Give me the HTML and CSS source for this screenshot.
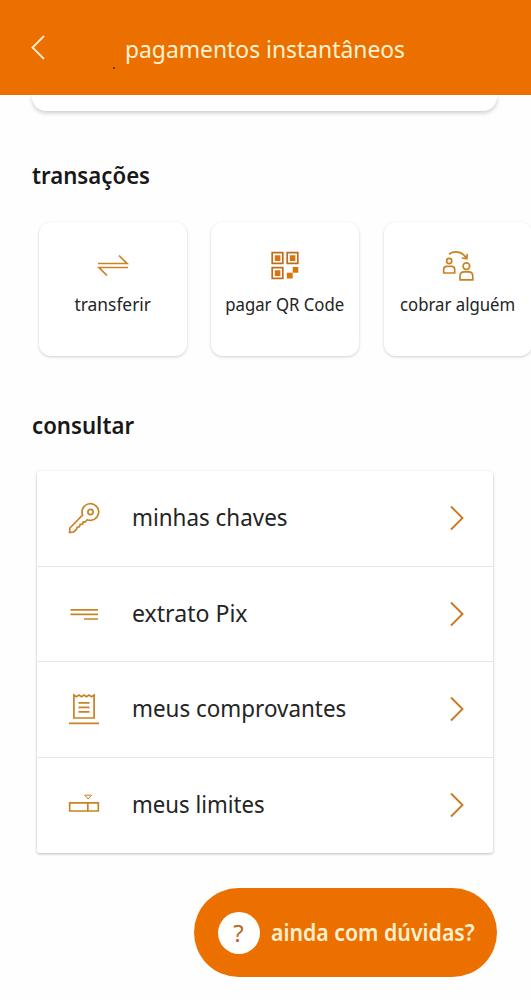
FILE: index.html
```html
<!DOCTYPE html>
<html lang="pt-BR">
<head>
<meta charset="utf-8">
<title>pagamentos instantâneos</title>
<link rel="stylesheet" href="styles.css">
</head>
<body>
<div class="screen">
  <header class="topbar">
    <svg class="back" width="16" height="28" viewBox="0 0 16 28"><path d="M14 2 L2.5 13.5 L14 25"/></svg>
    <span class="topbar-dot"></span>
    <h1 class="title">pagamentos instantâneos</h1>
  </header>
  <main class="content">
    <div class="peek"></div>
    <h2 class="heading">transações</h2>
    <div class="tiles">
      <a class="tile">
        <svg class="icon" width="34" height="34" viewBox="0 0 34 34"><path d="M2 15.5H31L23 7.5M32 19.5H3L11 27.5"/></svg>
        <span class="tile-label transfer">transferir</span>
      </a>
      <a class="tile">
        <svg class="icon qr" width="34" height="34" viewBox="0 0 34 34">
          <path d="M4.2 4.7h10.6v10.6H4.2zM19.2 4.7h10.6v10.6H19.2zM4.2 19.7h10.6v10.6H4.2z"/>
          <path class="solid" d="M6.8 7.3h5.6v5.6H6.8zM21.8 7.3h5.6v5.6h-5.6zM6.8 22.3h5.6v5.6H6.8zM24.7 19h5.6v5.8h-5.6zM18.8 24.8h5.9v5.8h-5.9z"/>
        </svg>
        <span class="tile-label">pagar QR Code</span>
      </a>
      <a class="tile">
        <svg class="icon people" width="34" height="34" viewBox="0 0 34 34">
          <circle cx="8.2" cy="13" r="2.6"/>
          <path d="M2.7 25v-3.6q0-3 3-3h5q3 0 3 3V25z"/>
          <circle cx="25.4" cy="18.2" r="3.3"/>
          <path d="M19 31.8v-3.6q0-4.3 4.3-4.3h4.2q4.3 0 4.3 4.3v3.6z"/>
          <path d="M8 6.2C13 2.6 21 3 25.2 10M26.3 5.8L25.8 10.8L20.8 10"/>
        </svg>
        <span class="tile-label">cobrar alguém</span>
      </a>
    </div>
    <h2 class="heading second">consultar</h2>
    <nav class="list">
      <a class="row">
        <svg class="icon" width="34" height="34" viewBox="0 0 34 34">
          <path d="M15.6 14A8.3 8.3 0 1 1 20.3 18.7L18.2 20.8L16.2 20.9L15.6 23.2L13.2 23.4L12.4 25.8L10.2 26.2L9.4 28.4L6.5 31L2.6 31.6L2.9 27Z"/>
          <circle cx="23.5" cy="11" r="2.6"/>
        </svg>
        <span class="label">minhas chaves</span>
        <svg class="chevron" width="16" height="28" viewBox="0 0 16 28"><path d="M2 2.5L13.5 14L2 25.5"/></svg>
      </a>
      <a class="row">
        <svg class="icon" width="34" height="34" viewBox="0 0 34 34"><path d="M3.5 12.8H31M3.5 17.3H31M17 22H31"/></svg>
        <span class="label statement">extrato Pix</span>
        <svg class="chevron" width="16" height="28" viewBox="0 0 16 28"><path d="M2 2.5L13.5 14L2 25.5"/></svg>
      </a>
      <a class="row">
        <svg class="icon" width="34" height="34" viewBox="0 0 34 34">
          <path d="M6.9 3L9.4 4.7L12 3L14.5 4.7L17 3L19.5 4.7L22 3L24.5 4.7L27.1 3V26H6.9ZM11.5 10.8H22.5M11.5 15.3H22.5M11.5 19.9H22.5M2 31.3H32"/>
        </svg>
        <span class="label">meus comprovantes</span>
        <svg class="chevron" width="16" height="28" viewBox="0 0 16 28"><path d="M2 2.5L13.5 14L2 25.5"/></svg>
      </a>
      <a class="row">
        <svg class="icon" width="34" height="34" viewBox="0 0 34 34">
          <path d="M2.7 14.8H31.3V23H2.7ZM20.8 14.8V23"/><path class="fine" d="M17.7 7.2H24.5L21.1 11Z"/>
        </svg>
        <span class="label limits">meus limites</span>
        <svg class="chevron" width="16" height="28" viewBox="0 0 16 28"><path d="M2 2.5L13.5 14L2 25.5"/></svg>
      </a>
    </nav>
    <a class="help">
      <span class="help-mark">?</span>
      <span class="help-text">ainda com dúvidas?</span>
    </a>
  </main>
</div>
</body>
</html>
```
FILE: styles.css
```css
* { box-sizing: border-box; }
body {
  margin: 0;
  background: #fefefe;
  color: #242424;
  font-family: "Noto Sans", "Open Sans", sans-serif;
}
.screen { width: 531px; height: 1000px; overflow: hidden; }
.topbar {
  position: relative;
  height: 95px;
  padding: 0 0 0 30px;
  display: flex;
  align-items: center;
  background: #ec7000;
}
.back { fill: none; stroke: #ffeccb; stroke-width: 1.8; }
.topbar-dot {
  position: absolute;
  left: 113px;
  top: 67px;
  width: 2px;
  height: 2px;
  background: #7b3c08;
}
.title {
  margin: 3px 0 0 79px;
  font-size: 24px;
  line-height: 32px;
  font-weight: 400;
  color: #fff3d3;
  white-space: nowrap;
  transform: scaleX(.952);
  transform-origin: left;
}
.content { display: flex; flex-direction: column; }
.peek {
  height: 16px;
  margin: 0 34px 0 32px;
  border-radius: 0 0 14px 14px;
  background: #fff;
  box-shadow: 0 2px 4px rgba(0, 0, 0, .2);
  clip-path: inset(0 -10px -10px -10px);
}
.heading {
  margin: 48px 0 0 32px;
  font-size: 24px;
  line-height: 32px;
  font-weight: 600;
  color: #181818;
  transform: scaleX(.925);
  transform-origin: left;
}
.tiles { display: flex; gap: 24.5px; margin: 31px 0 0 38.5px; }
.tile {
  flex: none;
  width: 148px;
  height: 133.5px;
  padding-top: 26px;
  display: flex;
  flex-direction: column;
  align-items: center;
  border-radius: 12px;
  background: #fff;
  box-shadow: 0 1px 3px rgba(0, 0, 0, .19);
}
.icon { flex: none; fill: none; stroke: #c98224; stroke-width: 1.7; }
.qr { stroke: #bd6d1c; }
.solid { fill: #d9750f; stroke: none; }
.fine { stroke-width: 1; }
.tile-label {
  margin-top: 10px;
  font-size: 18.5px;
  line-height: 24px;
  white-space: nowrap;
  transform: scaleX(.905);
}
.transfer { transform: scaleX(.94); }
.second { margin-top: 53.5px; }
.list {
  width: 456px;
  margin: 30px 0 0 36.5px;
  background: #fff;
  border-radius: 3px;
  box-shadow: 0 1px 3px rgba(0, 0, 0, .27);
}
.row {
  height: 95.5px;
  padding: 0 28px 0 30.5px;
  display: flex;
  align-items: center;
  border-bottom: 1px solid #e6e6e6;
}
.row:last-child { border-bottom: 0; }
.label {
  flex: 1;
  margin: -2px 0 0 31px;
  font-size: 24px;
  line-height: 32px;
  white-space: nowrap;
  transform: scaleX(.934);
  transform-origin: left;
}
.statement { transform: scaleX(.962); }
.limits { transform: scaleX(.926); }
.chevron { flex: none; fill: none; stroke: #c67a22; stroke-width: 1.9; }
.help {
  width: 303px;
  height: 89px;
  margin: 35px 0 0 193.5px;
  padding-left: 24px;
  display: flex;
  align-items: center;
  border-radius: 45px;
  background: #ec7000;
}
.help-mark {
  flex: none;
  width: 42px;
  height: 42px;
  border-radius: 50%;
  background: #fff;
  color: #bd6a20;
  font-size: 24px;
  line-height: 41px;
  text-align: center;
}
.help-text {
  margin: -1px 0 0 11px;
  font-size: 24px;
  line-height: 32px;
  font-weight: 600;
  color: #fff1cf;
  white-space: nowrap;
  transform: scaleX(.886);
  transform-origin: left;
}
```
